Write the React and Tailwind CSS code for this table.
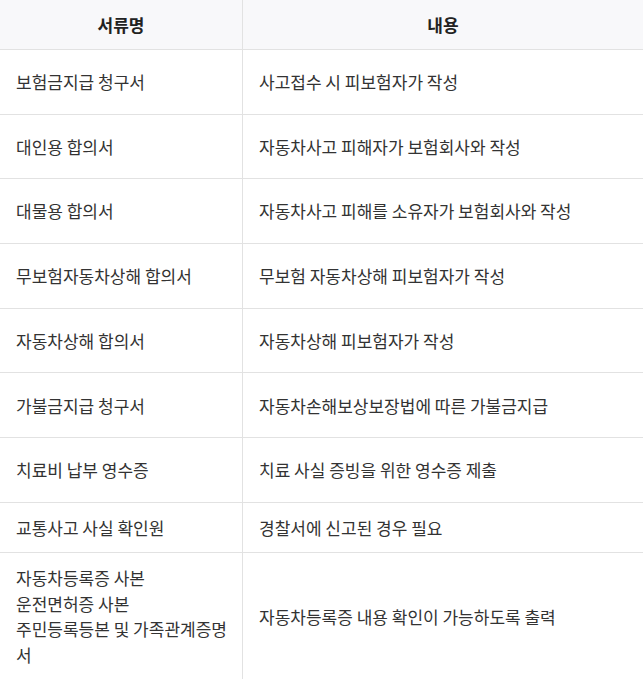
import React from "react";

const rows = [
  { name: ["보험금지급 청구서"], desc: "사고접수 시 피보험자가 작성", h: "h-[64.7px]" },
  { name: ["대인용 합의서"], desc: "자동차사고 피해자가 보험회사와 작성", h: "h-[64.7px]" },
  { name: ["대물용 합의서"], desc: "자동차사고 피해를 소유자가 보험회사와 작성", h: "h-[64.7px]" },
  { name: ["무보험자동차상해 합의서"], desc: "무보험 자동차상해 피보험자가 작성", h: "h-[64.7px]" },
  { name: ["자동차상해 합의서"], desc: "자동차상해 피보험자가 작성", h: "h-[64.7px]" },
  { name: ["가불금지급 청구서"], desc: "자동차손해보상보장법에 따른 가불금지급", h: "h-[64.7px]" },
  { name: ["치료비 납부 영수증"], desc: "치료 사실 증빙을 위한 영수증 제출", h: "h-[64.7px]" },
  { name: ["교통사고 사실 확인원"], desc: "경찰서에 신고된 경우 필요", h: "" },
  {
    name: ["자동차등록증 사본", "운전면허증 사본", "주민등록등본 및 가족관계증명서"],
    desc: "자동차등록증 내용 확인이 가능하도록 출력",
    h: "",
  },
];

export default function App() {
  return (
    <div
      className="w-[643px] h-[679px] overflow-hidden bg-white text-[17px] leading-[25.5px] text-[#333]"
      style={{ fontFamily: '"Noto Sans CJK KR", "Noto Sans", sans-serif' }}
    >
      <div className="flex h-[50px] border-b border-[#e2e2e2] bg-[#f8f8fa] font-bold text-[#222]">
        <div className="w-[243px] border-r border-[#e2e2e2] flex items-center justify-center">서류명</div>
        <div className="flex-1 flex items-center justify-center">내용</div>
      </div>
      {rows.map((r, i) => (
        <div key={i} className={`flex border-b border-[#e2e2e2] ${r.h}`}>
          <div className="w-[243px] shrink-0 border-r border-[#e2e2e2] flex items-center px-4 py-3">
            <div>
              {r.name.map((n, j) => (
                <div key={j} className="w-[211px]">{n}</div>
              ))}
            </div>
          </div>
          <div className="flex-1 flex items-center px-4 py-3">{r.desc}</div>
        </div>
      ))}
    </div>
  );
}
